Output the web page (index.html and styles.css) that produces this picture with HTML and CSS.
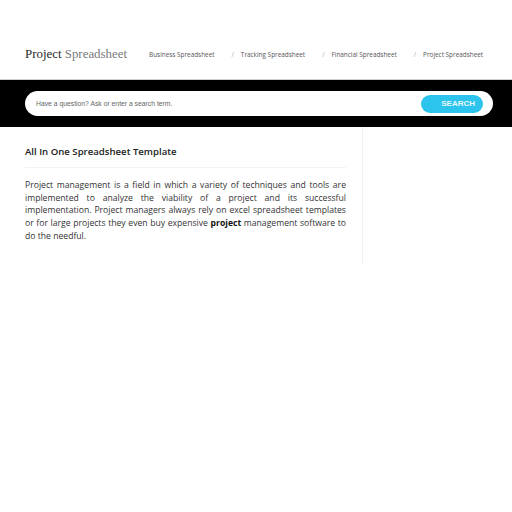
FILE: index.html
```html
<!DOCTYPE html>
<html>
<head>
<meta charset="utf-8">
<link rel="stylesheet" href="styles.css">
</head>
<body>
<header class="top">
  <div class="logo"><span class="l1">Project</span> <span class="l2">Spreadsheet</span></div>
  <nav class="nav">
    <a>Business Spreadsheet</a>
    <span class="sep">/</span>
    <a>Tracking Spreadsheet</a>
    <span class="sep">/</span>
    <a>Financial Spreadsheet</a>
    <span class="sep">/</span>
    <a>Project Spreadsheet</a>
  </nav>
</header>
<div class="band">
  <div class="search">
    <span class="ph">Have a question? Ask or enter a search term.</span>
    <span class="btn">SEARCH</span>
  </div>
</div>
<div class="main">
  <div class="content">
    <h1 class="title">All In One Spreadsheet Template</h1>
    <p class="text">Project management is a field in which a variety of techniques and tools are implemented to analyze the viability of a project and its successful implementation. Project managers always rely on excel spreadsheet templates or for large projects they even buy expensive <b>project</b> management software to do the needful.</p>
  </div>
  <div class="side"></div>
</div>
</body>
</html>
```

FILE: styles.css
```css
* { box-sizing: border-box; }
html, body { margin: 0; padding: 0; background: #fff; }
body { font-family: "Open Sans", sans-serif; color: #333; }
.top {
  height: 80px;
  display: flex;
  align-items: center;
  padding: 30px 25px 0;
  border-bottom: 1px solid #cfcfcf;
}
.logo {
  font-family: "Liberation Serif", serif;
  font-size: 12.9px;
  white-space: nowrap;
}
.logo .l1 { color: #2a2a2a; }
.logo .l2 { color: #7a7a7a; }
.nav {
  display: flex;
  align-items: center;
  margin-left: 22px;
  font-size: 6.4px;
  color: #555;
  white-space: nowrap;
}
.nav a { color: #555; }
.nav .sep { color: #aaa; margin: 0 7px 0 17px; }
.band {
  background: #000;
  height: 47px;
  padding: 11px 19px 0 25px;
}
.search {
  background: #fff;
  height: 25px;
  border-radius: 13px;
  display: flex;
  align-items: center;
  justify-content: space-between;
  padding: 0 10px 0 11px;
}
.ph {
  font-family: "Liberation Sans", Arial, sans-serif;
  font-size: 6.8px;
  color: #666;
}
.btn {
  background: #2cc3ec;
  color: #e8f8ff;
  font-family: "Liberation Sans", Arial, sans-serif;
  font-size: 8px;
  font-weight: bold;
  width: 62px;
  height: 18px;
  border-radius: 9px;
  display: flex;
  align-items: center;
  justify-content: flex-end;
  padding-right: 8px;
}
.main {
  display: flex;
  padding-left: 25px;
}
.content {
  width: 321px;
  padding-top: 18px;
}
.title {
  margin: 0;
  font-size: 9.6px;
  font-weight: 600;
  color: #222;
  padding-bottom: 9px;
  border-bottom: 1px solid #f3f3f3;
}
.text {
  margin: 11px 0 0;
  font-size: 8.65px;
  line-height: 12.7px;
  text-align: justify;
  color: #333;
}
.text b { font-weight: 700; color: #111; }
.side {
  margin-left: 16px;
  width: 1px;
  height: 137px;
  background: #f0f0f0;
}
```
